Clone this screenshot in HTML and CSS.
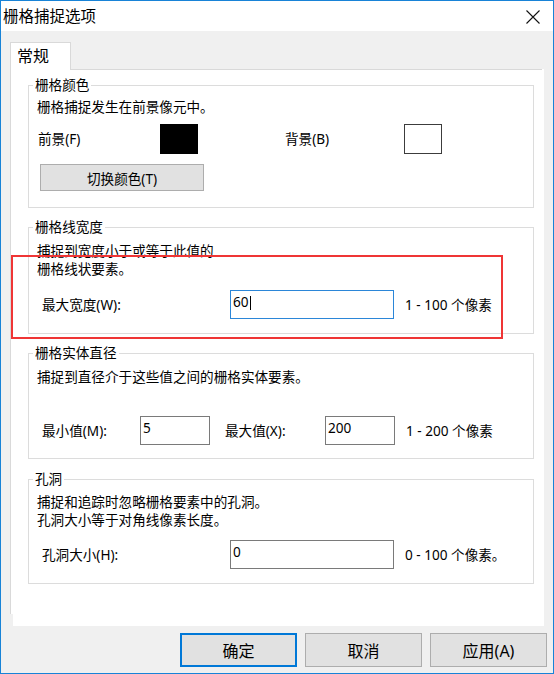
FILE: index.html
```html
<!DOCTYPE html>
<html lang="zh-CN">
<head>
<meta charset="utf-8">
<title>栅格捕捉选项</title>
<link rel="stylesheet" href="styles.css">
</head>
<body>
<div class="window">
  <div class="titlebar">
    <span class="title">栅格捕捉选项</span>
    <svg class="close" width="14" height="14" viewBox="0 0 14 14"><path d="M0.5 0.5 L13.5 13.5 M13.5 0.5 L0.5 13.5" stroke="#111" stroke-width="1.1" fill="none"/></svg>
  </div>
  <div class="content">
    <div class="tabs"><div class="tab">常规</div></div>
    <div class="panel">
      <div class="group g1">
        <div class="legend">栅格颜色</div>
        <div class="desc">栅格捕捉发生在前景像元中。</div>
        <div class="color-row">
          <span class="lbl">前景(F)</span>
          <span class="swatch black"></span>
          <span></span>
          <span class="lbl">背景(B)</span>
          <span class="swatch white"></span>
        </div>
        <div class="btn swap">切换颜色(T)</div>
      </div>
      <div class="group g2">
        <div class="legend">栅格线宽度</div>
        <div class="desc">捕捉到宽度小于或等于此值的<br>栅格线状要素。</div>
        <div class="field-row">
          <span class="lbl wide">最大宽度(W):</span>
          <div class="input long focused">60<span class="caret"></span></div>
          <span class="range">1 - 100 个像素</span>
        </div>
      </div>
      <div class="group g3">
        <div class="legend">栅格实体直径</div>
        <div class="desc">捕捉到直径介于这些值之间的栅格实体要素。</div>
        <div class="field-row">
          <span class="lbl min">最小值(M):</span>
          <div class="input short">5</div>
          <span class="lbl max">最大值(X):</span>
          <div class="input short">200</div>
          <span class="range">1 - 200 个像素</span>
        </div>
      </div>
      <div class="group g4">
        <div class="legend">孔洞</div>
        <div class="desc">捕捉和追踪时忽略栅格要素中的孔洞。<br>孔洞大小等于对角线像素长度。</div>
        <div class="field-row">
          <span class="lbl wide">孔洞大小(H):</span>
          <div class="input long">0</div>
          <span class="range">0 - 100 个像素。</span>
        </div>
      </div>
    </div>
    <div class="footer">
      <div class="btn big default">确定</div>
      <div class="btn big">取消</div>
      <div class="btn big">应用(A)</div>
    </div>
  </div>
  <div class="annotation"></div>
</div>
</body>
</html>
```
FILE: styles.css
```css
html, body {
  margin: 0;
  padding: 0;
  background: #ffffff;
}

body {
  font-family: "Noto Sans", "Noto Sans CJK SC", sans-serif;
  font-size: 13.6px;
  color: #000;
}

.window {
  position: relative;
  width: 554px;
  height: 674px;
  box-sizing: border-box;
  border: 1px solid #1883d7;
  background: #f0f0f0;
  display: flex;
  flex-direction: column;
}

.titlebar {
  height: 30px;
  background: #ffffff;
  display: flex;
  align-items: center;
  justify-content: space-between;
  padding: 0 13px 0 2px;
}

.title {
  font-size: 15.5px;
  line-height: 20px;
}

.close {
  display: block;
  margin-top: 1px;
}

.content {
  flex: 1;
  display: flex;
  flex-direction: column;
  padding-top: 11px;
}

.tabs {
  display: flex;
  padding-left: 9px;
}

.tab {
  position: relative;
  width: 61px;
  height: 28px;
  margin-bottom: -1px;
  box-sizing: border-box;
  border: 1px solid #d9d9d9;
  border-bottom: none;
  background: #ffffff;
  font-size: 16px;
  line-height: 20px;
  padding: 3px 0 0 6px;
}

.panel {
  margin-left: 9px;
  width: 534px;
  height: 557px;
  box-sizing: border-box;
  padding: 16px 0 0 18px;
  background:
    linear-gradient(#d9d9d9, #d9d9d9) 0 0 / 532px 1px no-repeat,
    linear-gradient(#d9d9d9, #d9d9d9) 0 0 / 1px 545px no-repeat,
    linear-gradient(#f0f0f0, #f0f0f0) 0 100% / 3px 12px no-repeat,
    #ffffff;
}

.group {
  position: relative;
  width: 506px;
  box-sizing: border-box;
  border: 1px solid #dcdcdc;
  padding-left: 8px;
}

.legend {
  position: absolute;
  top: -10px;
  left: 4px;
  padding: 0 2px;
  background: #ffffff;
  line-height: 18px;
}

.desc {
  line-height: 18px;
}

.g1 { height: 123px; padding-top: 12px; }
.g2 { height: 107px; padding-top: 14px; margin-top: 19px; }
.g3 { height: 106px; padding-top: 14px; margin-top: 19px; }
.g4 { height: 105px; padding-top: 13px; margin-top: 20px; }

.color-row {
  display: grid;
  grid-template-columns: 123px 38px 86px 120px 38px;
  align-items: center;
  height: 30px;
  margin-top: 8px;
}

.color-row .lbl {
  padding-left: 1px;
}

.swatch {
  display: block;
  height: 30px;
  box-sizing: border-box;
}

.swatch.black {
  background: #000;
  border: 1px solid #000;
}

.swatch.white {
  background: #fff;
  border: 1px solid #3c3c3c;
}

.btn {
  box-sizing: border-box;
  background: #e1e1e1;
  border: 1px solid #adadad;
  display: flex;
  align-items: center;
  justify-content: center;
}

.swap {
  width: 164px;
  height: 27px;
  margin: 10px 0 0 3px;
}

.field-row {
  display: flex;
  align-items: center;
  height: 29px;
}

.g2 .field-row { margin-top: 12px; }
.g3 .field-row { margin-top: 30px; }
.g4 .field-row { margin-top: 11px; }

.lbl {
  line-height: 18px;
}

.field-row .lbl {
  box-sizing: border-box;
  padding-left: 5px;
}

.lbl.wide { width: 193px; }
.lbl.min { width: 103px; }
.lbl.max { width: 100px; padding-left: 0; margin-left: 15px; }

.input {
  box-sizing: border-box;
  height: 29px;
  background: #fff;
  border: 1px solid #7a7a7a;
  padding: 2px 0 0 2px;
  line-height: 18px;
  display: flex;
  align-items: flex-start;
}

.input.long { width: 164px; }
.input.short { width: 70px; }

.input.focused {
  border-color: #2b86d8;
}

.caret {
  display: block;
  width: 1px;
  height: 14px;
  margin: 3px 0 0 1px;
  background: #000;
}

.range {
  margin-left: 11px;
  line-height: 18px;
}

.footer {
  display: flex;
  justify-content: flex-end;
  gap: 8px;
  padding-right: 6px;
  margin-top: 7px;
}

.btn.big {
  width: 117px;
  height: 34px;
  font-size: 16px;
}

.btn.default {
  border: 2px solid #0078d7;
}

.annotation {
  position: absolute;
  left: 10px;
  top: 254px;
  width: 492px;
  height: 84px;
  box-sizing: border-box;
  border: 2px solid #ef3535;
}
```
